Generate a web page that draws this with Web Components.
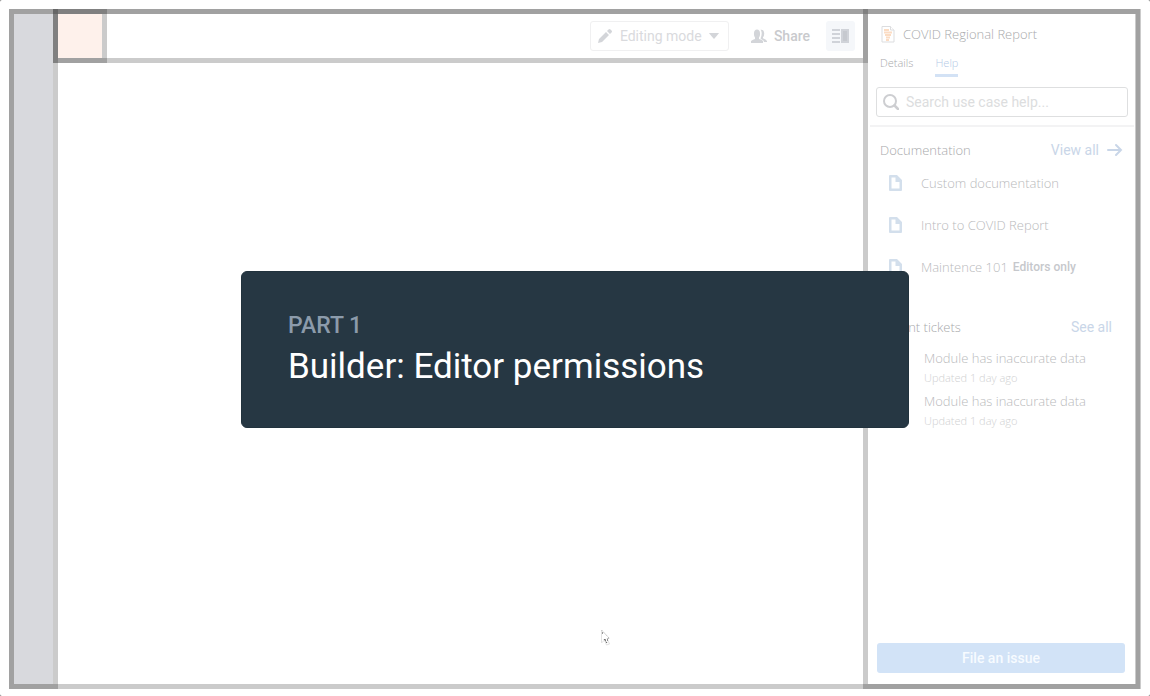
<!DOCTYPE html>
<html lang="en">
<head>
<meta charset="utf-8">
<title>COVID Regional Report</title>
<style>
html { background: #777; height: 100%; }
body { margin: 0; min-height: 100%; font-family: Roboto, "Liberation Sans", sans-serif; --line: rgba(0,0,0,.205); --hand: "Open Sans", Lato, sans-serif; }
</style>
</head>
<body>
<app-shell>
  <side-rail slot="rail"></side-rail>
  <top-bar slot="top"></top-bar>
  <help-panel slot="panel">
    <doc-row>Custom documentation</doc-row>
    <doc-row>Intro to COVID Report</doc-row>
    <doc-row tag="Editors only">Maintence 101</doc-row>
    <ticket-row slot="tickets" when="Updated 1 day ago">Module has inaccurate data</ticket-row>
    <ticket-row slot="tickets" when="Updated 1 day ago">Module has inaccurate data</ticket-row>
  </help-panel>
  <title-card slot="overlay" part-label="PART 1">Builder: Editor permissions</title-card>
  <mouse-cursor slot="overlay"></mouse-cursor>
</app-shell>
<script>
function define(name, html, setup) {
  const t = document.createElement('template');
  t.innerHTML = '<style>*{box-sizing:border-box}a{color:inherit;text-decoration:none}button,input,select{font:inherit;color:inherit;margin:0}svg{display:block;flex:none}</style>' + html;
  customElements.define(name, class extends HTMLElement {
    constructor() {
      super();
      this.attachShadow({ mode: 'open' }).append(t.content.cloneNode(true));
    }
    connectedCallback() { if (setup) setup(this, this.shadowRoot); }
  });
}

define('app-shell', `<style>
:host { display: flex; position: relative; min-height: 100vh; box-sizing: border-box; padding: 9px 9px 7px; background: #fff; border-radius: 2px; overflow: hidden; }
.frame { flex: 1; display: grid; grid-template: 49px 1fr / 44px minmax(0,1fr) 273px; border: 5px solid var(--line); }
slot[name=rail]::slotted(*) { grid-row: 1 / 3; margin: -5px 0 -5px -5px; }
slot[name=top]::slotted(*) { grid-column: 2; margin: -5px -5px 0; }
slot[name=panel]::slotted(*) { grid-column: 3; grid-row: 1 / 3; margin: -5px -4px -5px 0; }
</style>
<div class="frame"><slot name="rail"></slot><slot name="top"></slot><slot name="panel"></slot></div>
<slot name="overlay"></slot>`);

define('side-rail', `<style>
:host { display: block; border: 5px solid var(--line); background: #d8d9dd padding-box; }
</style>`);

define('top-bar', `<style>
:host { display: flex; align-items: center; border: 5px solid var(--line); padding-right: 8px; font-size: 14px; }
.logo { width: 54px; height: 54px; margin: -5px; border: 5px solid var(--line); background: #fef1eb padding-box; flex: none; }
.mode { display: grid; grid-template-columns: 139px; height: 30px; align-items: center; margin-left: auto; color: #d9dadd; }
.mode > * { grid-area: 1 / 1; }
select { appearance: none; width: 100%; height: 30px; padding: 0 8px 0 29px; border: 1px solid #f0f0f1; border-radius: 3px; background: none; }
.pen { margin-left: 8px; } .caret { justify-self: end; margin-right: 10px; }
button { display: flex; align-items: center; border: 0; background: none; padding: 0; }
.share { gap: 7px; margin: 0 16px 0 22px; font-weight: 500; color: #c9cacd; }
.toggle { width: 29px; height: 30px; justify-content: center; background: #f5f7fa; border-radius: 3px; }
</style>
<div class="logo"></div>
<label class="mode"><select aria-label="Mode"><option>Editing mode</option></select>
<svg class="pen" width="14" height="14" viewBox="0 0 14 14" fill="#d3d5d9"><path d="M0 14l1-4 7-7 3 3-7 7zM9 2l1.500-1.500q1-1 2 0l1 1q1 1 0 2L12 5z"/></svg>
<svg class="caret" width="10" height="6" fill="#d3d5d9"><path d="M.5 0h9q.5 0 .2.500L5.500 5.500q-.500.500-1 0L.3.500Q0 0 .5 0z"/></svg></label>
<button class="share"><svg width="16" height="14" viewBox="0 0 16 14" fill="#d3d5d9"><path d="M0 14v-2q2-1.500 4-2V8.500Q2.700 7 3 4q.2-3.500 3-3.500T9 4q.300 3-1 4.500V10q3 .7 4 2v2zM9.500.8Q13 0 13.200 4q.1 3-1.200 4.300v1Q15 10.500 16 12v1h-3q-.3-2-3.500-3.500Q11 6 10.600 3.500 10.400 1.500 9.500.8z"/></svg>Share</button>
<button class="toggle" aria-label="Toggle panel"><svg width="17" height="14" fill="#d0d3d9"><path d="M0 0h8v2H0zM0 4h8v2H0zM0 8h8v2H0zM0 12h8v2H0zM9 0h8v14H9z"/><path d="M11 2h4v10h-4z" fill="#c6c9cf"/></svg></button>`);

define('help-panel', `<style>
:host { display: flex; flex-direction: column; border: 5px solid var(--line); padding-bottom: 11px; font-size: 14px; }
.hand { font-family: var(--hand); font-weight: 300; margin: 0; }
header { display: flex; align-items: center; height: 40px; padding-left: 13px; gap: 8px; }
h1 { font-size: 13px; line-height: 20px; color: #a9aaac; }
nav { display: flex; gap: 22px; padding-left: 12px; height: 23px; font-size: 11px; line-height: 18px; color: #a9aaac; }
nav a { height: 23px; } nav .on { color: #b4c9e6; border-bottom: 3px solid #d3e2f5; }
.search { display: flex; align-items: center; gap: 7px; height: 30px; margin: 10px 7px 8px 8px; padding: 0 6px; border: 1px solid #dedfe0; border-radius: 3px; }
input { flex: 1; min-width: 0; border: 0; padding: 0; background: none; outline: 0; }
input::placeholder { color: #dcddde; opacity: 1; }
hr { border: 0; height: 2px; background: #f3f3f4; margin: 0 1px 0 2px; width: auto; }
.head { display: flex; align-items: center; justify-content: space-between; height: 24px; padding: 0 12px; }
.docs { margin-top: 11px; } .tix { margin: 27px 0 9px; padding-right: 23px; }
h2 { font-size: 13px; color: #a9aaac; }
.head a { display: flex; align-items: center; gap: 8px; color: #c9d6e8; }
.list { display: grid; gap: 3px; }
button { height: 30px; margin: auto 10px 0 9px; border: 0; border-radius: 3px; background: #d2e3f7; color: #f7fbff; font-weight: 500; }
</style>
<header><svg width="14" height="17" fill="#fff" stroke="#dcdddf"><path d="M1 .5h8.500l3.500 3.500v12H1z"/><path d="M9.500.5V4H13" /><path d="M3 4h5M3 6.500h8M4 9h6M5 11.500h4M5 14h3" stroke="#fbdcc3" stroke-width="2"/></svg><h1 class="hand">COVID Regional Report</h1></header>
<nav class="hand"><a href="#details">Details</a><a class="on" href="#help">Help</a></nav>
<label class="search"><svg width="16" height="16" fill="none" stroke="#cdced1" stroke-width="2"><circle cx="7" cy="7" r="6"/><path d="M11.500 11.500l3.500 3.500" stroke-width="2.500" stroke-linecap="round"/></svg><input type="search" aria-label="Search help" placeholder="Search use case help..."></label>
<hr>
<div class="head docs"><h2 class="hand">Documentation</h2><a href="#docs">View all<svg width="16" height="14" fill="none" stroke="#c9d6e8" stroke-width="2" stroke-linecap="round"><path d="M1 7h13M9 2l5 5-5 5"/></svg></a></div>
<slot></slot>
<div class="head tix"><h2 class="hand">Recent tickets</h2><a href="#tickets">See all</a></div>
<div class="list"><slot name="tickets"></slot></div>
<button>File an issue</button>`);

define('doc-row', `<style>
:host { display: flex; align-items: center; height: 42px; padding-left: 21px; }
a { font: 300 13px/20px var(--hand); color: #b9babc; margin-left: 19px; }
b { font-size: 12px; font-weight: 500; color: #c6c8cc; margin-left: 5px; }
</style>
<svg width="13" height="16" fill="#d3dfec"><path fill-rule="evenodd" d="M1 0h7l5 5v10q0 1-1 1H1q-1 0-1-1V1q0-1 1-1zM2.500 2.500v11h8V7H6.500V2.500z"/></svg>
<a href="#doc"><slot></slot></a><b></b>`, (el, root) => {
  const tag = root.querySelector('b');
  tag.textContent = el.getAttribute('tag') || '';
  tag.hidden = !el.hasAttribute('tag');
});

define('ticket-row', `<style>
:host { display: block; padding-left: 56px; font: 300 13px/20px var(--hand); color: #b9babc; }
small { display: block; font-size: 11px; color: #d0d1d2; }
</style><a href="#ticket"><slot></slot></a><small></small>`, (el, root) => {
  root.querySelector('small').textContent = el.getAttribute('when');
});

define('title-card', `<style>
:host { position: absolute; inset: 3px 0 0; display: grid; place-items: center; pointer-events: none; }
section { width: 668px; max-width: 90%; padding: 39px 46px 38px; border-radius: 6px; background: #263743; color: #fff; border: 1px solid #21323d; }
p { margin: 0 0 3px; font-size: 23px; line-height: 30px; font-weight: 500; color: #8c9bab; }
h2 { margin: 0; font-size: 35px; line-height: 45px; font-weight: 400; }
</style><section><p></p><h2><slot></slot></h2></section>`, (el, root) => {
  root.querySelector('p').textContent = el.getAttribute('part-label');
});

define('mouse-cursor', `<style>
:host { position: absolute; left: 600px; top: 629px; pointer-events: none; }
</style><svg width="12" height="18" fill="none" stroke="#bbb" stroke-width="1"><path d="M1.500 1v13l3-3 2 5 3-1-2-4.500" stroke="#e2e2e2"/><path d="M1.500 1l8 8.500H6" stroke-dasharray="2 1"/><path d="M2 4h1M4 10l3 4M5 11h3" stroke="#333" stroke-dasharray="1 1"/></svg>`);
</script>
</body>
</html>
